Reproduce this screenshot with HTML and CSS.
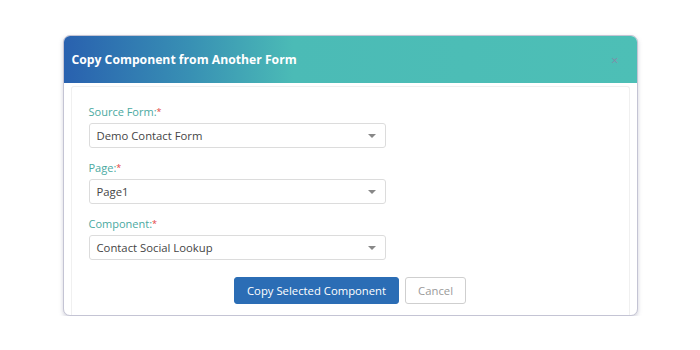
FILE: index.html
```html
<!DOCTYPE html>
<html lang="en">

<head>
    <meta charset="UTF-8">
    <meta name="viewport" content="width=device-width, initial-scale=1.0">
    <title>Copy Component</title>
    <link rel="stylesheet" href="styles.css">
</head>

<body>
    <div class="modal">
        <div class="modal-header">
            <h2>Copy Component from Another Form</h2>
            <span class="close">&times;</span>
        </div>
        <div class="modal-body">
            <div class="panel">
                <div class="field">
                    <label>Source Form:<span class="req">*</span></label>
                    <div class="select">Demo Contact Form<span class="caret"></span></div>
                </div>
                <div class="field">
                    <label>Page:<span class="req">*</span></label>
                    <div class="select">Page1<span class="caret"></span></div>
                </div>
                <div class="field">
                    <label>Component:<span class="req">*</span></label>
                    <div class="select">Contact Social Lookup<span class="caret"></span></div>
                </div>
                <div class="actions">
                    <button type="button" class="btn btn-primary">Copy Selected Component</button>
                    <button type="button" class="btn btn-cancel">Cancel</button>
                </div>
            </div>
        </div>
    </div>
</body>

</html>
```

FILE: styles.css
```css
* {
    box-sizing: border-box;
}

body {
    margin: 0;
    background-color: white;
    font-family: 'Open Sans', 'DejaVu Sans', sans-serif;
}

.modal {
    width: 575px;
    height: 281px;
    margin: 35px auto 0;
    border: 1px solid #c4c4d4;
    border-radius: 7px;
    overflow: hidden;
    display: flex;
    flex-direction: column;
    box-shadow: 0 2px 4px rgba(120, 120, 150, 0.35);
    background-color: white;
}

.modal-header {
    height: 47px;
    flex: none;
    display: flex;
    align-items: center;
    justify-content: space-between;
    padding: 0 18px 0 8px;
    background: linear-gradient(90deg, #2961af 0%, #3890b4 22%, #4bbbb6 40%, #4dbfb6 100%);
}

.modal-header h2 {
    margin: 0;
    font-size: 12.2px;
    font-weight: 700;
    color: white;
}

.close {
    color: #7d8fa8;
    font-size: 13px;
}

.modal-body {
    flex: 1;
    display: flex;
    padding: 3px 7px 0;
}

.panel {
    flex: 1;
    border: 1px solid #f0f0f0;
    border-bottom: none;
    border-radius: 3px 3px 0 0;
    padding: 17px 17px 0;
}

.field {
    margin-bottom: 12px;
}

.field label {
    display: block;
    font-size: 11px;
    color: #4aa9a1;
    margin-bottom: 3px;
    line-height: 16px;
}

.req {
    color: #e2433f;
    font-size: 9px;
    vertical-align: top;
}

.select {
    width: 297px;
    height: 25px;
    border: 1px solid #dcdcdc;
    border-radius: 3px;
    padding: 0 8px 0 7px;
    display: flex;
    align-items: center;
    justify-content: space-between;
    font-size: 11.3px;
    color: #454545;
}

.caret {
    width: 0;
    height: 0;
    border-left: 4px solid transparent;
    border-right: 4px solid transparent;
    border-top: 4px solid #888;
    margin-right: 1px;
}

.actions {
    display: flex;
    justify-content: center;
    gap: 6px;
    margin-top: 17px;
}

.btn {
    height: 27px;
    border-radius: 3px;
    font-family: inherit;
    font-size: 11.3px;
    padding: 0 12px;
}

.btn-primary {
    background-color: #2b6db5;
    border: 1px solid #2b6db5;
    color: white;
}

.btn-cancel {
    background-color: white;
    border: 1px solid #cfcfcf;
    color: #9a9a9a;
}
```
